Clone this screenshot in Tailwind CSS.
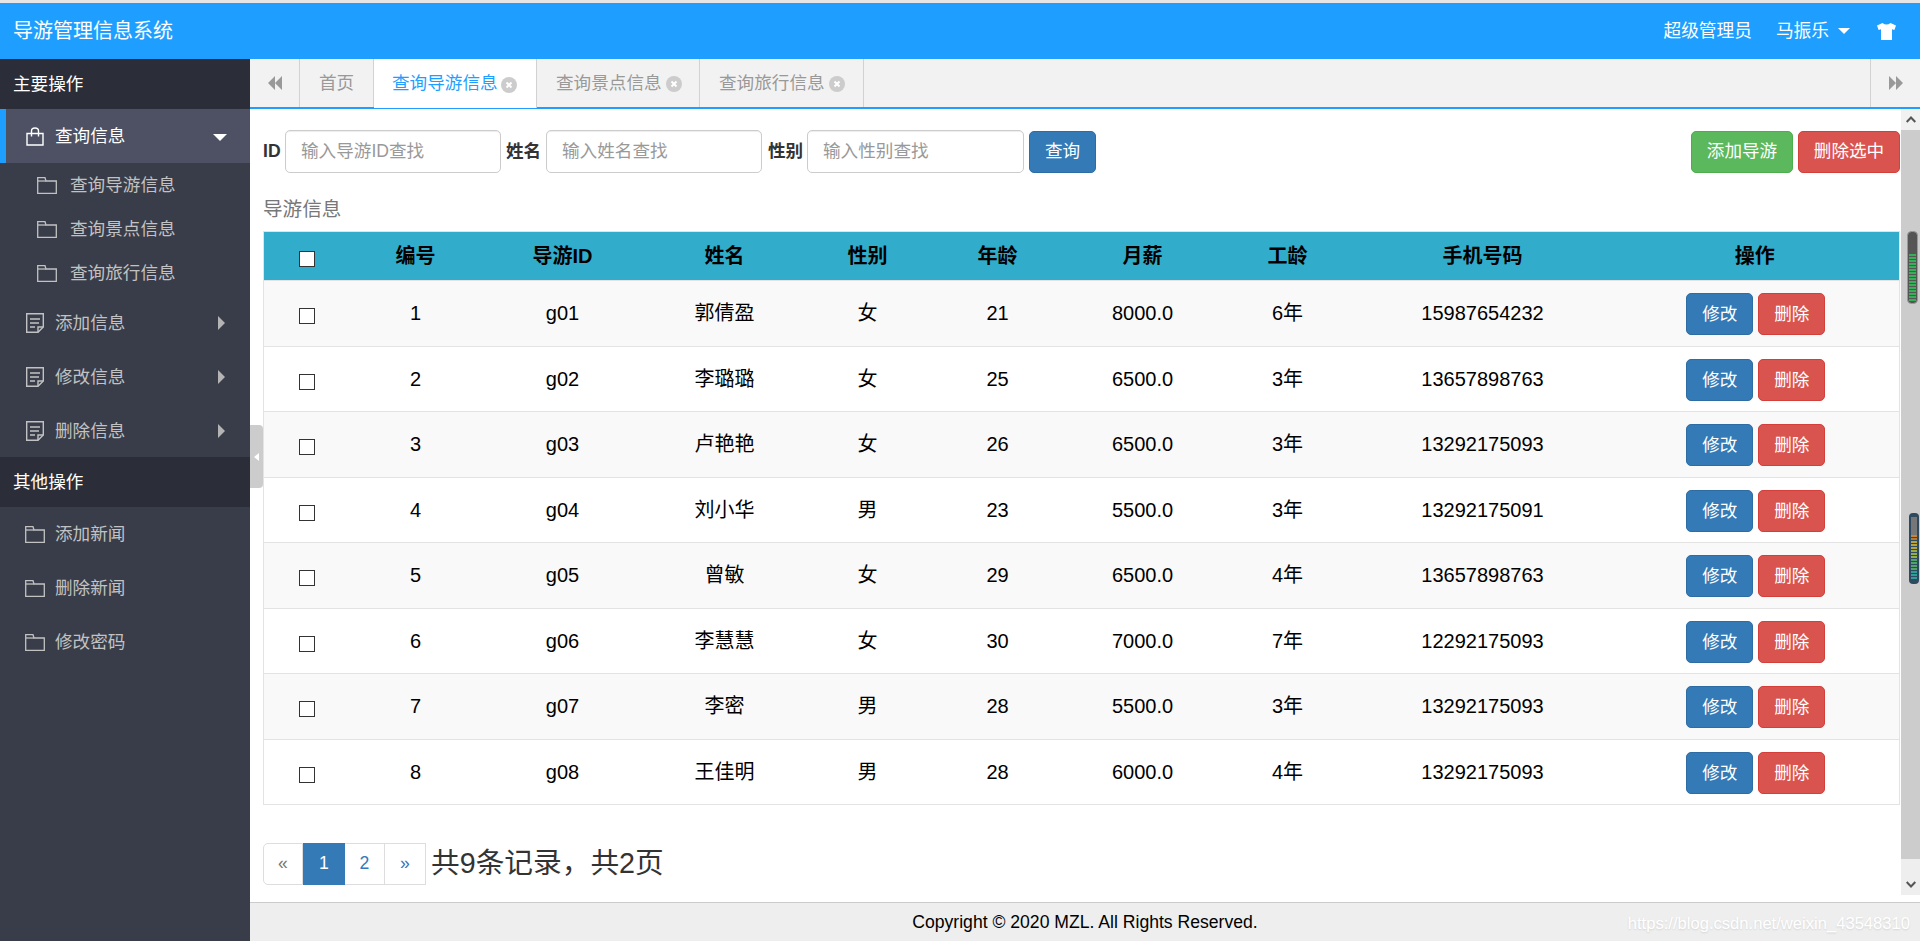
<!DOCTYPE html>
<html lang="zh-CN">
<head>
    <meta charset="UTF-8">
    <meta name="viewport" content="width=device-width, initial-scale=1.0">
    <title>导游管理信息系统</title>
    <script src="https://cdn.jsdelivr.net/npm/@tailwindcss/browser@4"></script>
</head>
<body class="h-[941px] w-[1920px] overflow-hidden flex flex-col bg-white text-[#333] font-['Liberation_Sans','Noto_Sans_CJK_SC',sans-serif]">
    <!-- top bar -->
    <div class="h-[3px] shrink-0 bg-[#e6e6e6]"></div>
    <header class="h-[56px] shrink-0 bg-[#1e9fff] text-white flex items-center pl-[13px] pr-[24px] text-[17.7px]">
        <div class="text-[20px] flex-1">导游管理信息系统</div>
        <span>超级管理员</span>
        <span class="ml-[24px]">马振乐</span>
        <span class="ml-[9px] w-0 h-0 border-x-[6px] border-x-transparent border-t-[6px] border-t-white"></span>
        <svg class="ml-[27px]" width="19" height="17" viewBox="0 0 19 17"><path fill="#fff" d="M5.5 0 L0 2.6 L1.6 7 L4 6.2 V17 H15 V6.2 L17.4 7 L19 2.6 L13.5 0 Q9.5 3 5.5 0Z"/></svg>
    </header>

    <div class="flex-1 flex min-h-0">
        <!-- sidebar -->
        <aside class="w-[250px] shrink-0 bg-[#393d49] text-[#c2c2c2] text-[17.6px]">
            <div class="h-[50px] bg-[#2b2e38] text-white flex items-center pl-[13px]">主要操作</div>
            <div class="h-[54px] bg-[#4d5163] border-l-[6px] border-[#1e9fff] text-white flex items-center pl-[20px] pr-[23px]">
                <svg width="18" height="19" viewBox="0 0 18 19" fill="none" stroke="#fff" stroke-width="1.4"><path d="M1 6.5 H17 V18 H1Z"/><path d="M5.5 9.5 V4 Q5.5 1 9 1 Q12.5 1 12.5 4 V9.5"/></svg>
                <span class="ml-[11px] flex-1">查询信息</span>
                <span class="w-0 h-0 border-x-[7px] border-x-transparent border-t-[7px] border-t-white mt-[3px]"></span>
            </div>
            <a class="h-[44px] flex items-center pl-[37px]">
                <svg width="20" height="17" viewBox="0 0 20 17" fill="none" stroke="#c2c2c2" stroke-width="1.3"><path d="M.7 .7 H8 L9 4 H19.3 V16.3 H.7Z"/><path d="M.7 4 H9"/></svg>
                <span class="ml-[13px]">查询导游信息</span>
            </a>
            <a class="h-[44px] flex items-center pl-[37px]">
                <svg width="20" height="17" viewBox="0 0 20 17" fill="none" stroke="#c2c2c2" stroke-width="1.3"><path d="M.7 .7 H8 L9 4 H19.3 V16.3 H.7Z"/><path d="M.7 4 H9"/></svg>
                <span class="ml-[13px]">查询景点信息</span>
            </a>
            <a class="h-[44px] flex items-center pl-[37px] mb-[1px]">
                <svg width="20" height="17" viewBox="0 0 20 17" fill="none" stroke="#c2c2c2" stroke-width="1.3"><path d="M.7 .7 H8 L9 4 H19.3 V16.3 H.7Z"/><path d="M.7 4 H9"/></svg>
                <span class="ml-[13px]">查询旅行信息</span>
            </a>
            <a class="h-[54px] flex items-center pl-[26px] pr-[25px]">
                <svg width="18" height="20" viewBox="0 0 18 20" fill="none" stroke="#c2c2c2" stroke-width="1.4"><path d="M.7 .7 H17.3 V14 L12 19.3 H.7Z"/><path d="M12 19.3 V14 H17.3"/><path d="M4 6 H14 M4 10 H13 M4 14 H9"/></svg>
                <span class="ml-[11px] flex-1">添加信息</span>
                <span class="w-0 h-0 border-y-[7px] border-y-transparent border-l-[7px] border-l-[#b4b4b4]"></span>
            </a>
            <a class="h-[54px] flex items-center pl-[26px] pr-[25px]">
                <svg width="18" height="20" viewBox="0 0 18 20" fill="none" stroke="#c2c2c2" stroke-width="1.4"><path d="M.7 .7 H17.3 V14 L12 19.3 H.7Z"/><path d="M12 19.3 V14 H17.3"/><path d="M4 6 H14 M4 10 H13 M4 14 H9"/></svg>
                <span class="ml-[11px] flex-1">修改信息</span>
                <span class="w-0 h-0 border-y-[7px] border-y-transparent border-l-[7px] border-l-[#b4b4b4]"></span>
            </a>
            <a class="h-[54px] flex items-center pl-[26px] pr-[25px]">
                <svg width="18" height="20" viewBox="0 0 18 20" fill="none" stroke="#c2c2c2" stroke-width="1.4"><path d="M.7 .7 H17.3 V14 L12 19.3 H.7Z"/><path d="M12 19.3 V14 H17.3"/><path d="M4 6 H14 M4 10 H13 M4 14 H9"/></svg>
                <span class="ml-[11px] flex-1">删除信息</span>
                <span class="w-0 h-0 border-y-[7px] border-y-transparent border-l-[7px] border-l-[#b4b4b4]"></span>
            </a>
            <div class="h-[50px] bg-[#2b2e38] text-white flex items-center pl-[13px] mt-[-1px]">其他操作</div>
            <a class="h-[54px] flex items-center pl-[25px]">
                <svg width="20" height="17" viewBox="0 0 20 17" fill="none" stroke="#c2c2c2" stroke-width="1.3"><path d="M.7 .7 H8 L9 4 H19.3 V16.3 H.7Z"/><path d="M.7 4 H9"/></svg>
                <span class="ml-[10px]">添加新闻</span>
            </a>
            <a class="h-[54px] flex items-center pl-[25px]">
                <svg width="20" height="17" viewBox="0 0 20 17" fill="none" stroke="#c2c2c2" stroke-width="1.3"><path d="M.7 .7 H8 L9 4 H19.3 V16.3 H.7Z"/><path d="M.7 4 H9"/></svg>
                <span class="ml-[10px]">删除新闻</span>
            </a>
            <a class="h-[54px] flex items-center pl-[25px]">
                <svg width="20" height="17" viewBox="0 0 20 17" fill="none" stroke="#c2c2c2" stroke-width="1.3"><path d="M.7 .7 H8 L9 4 H19.3 V16.3 H.7Z"/><path d="M.7 4 H9"/></svg>
                <span class="ml-[10px]">修改密码</span>
            </a>
        </aside>

        <main class="flex-1 min-w-0 flex flex-col relative">
            <!-- sidebar collapse handle -->
            <div class="absolute left-0 top-[366px] w-[13px] h-[63px] bg-[#cccccc] rounded-r-[4px] flex items-center justify-center z-10">
                <span class="w-0 h-0 border-y-[4px] border-y-transparent border-r-[5px] border-r-white"></span>
            </div>

            <!-- tabs -->
            <div class="h-[50px] shrink-0 bg-[#f2f2f2] border-b-2 border-[#1e9fff] flex text-[17.6px] text-[#999]">
                <div class="w-[50px] border-r border-[#d2d2d2] flex items-center justify-center">
                    <svg width="14" height="14" viewBox="0 0 14 14"><path fill="#999" d="M7 0 V14 L0 7Z M14 0 V14 L7 7Z"/></svg>
                </div>
                <div class="w-[74px] border-r border-[#d2d2d2] flex items-center pl-[19px]">首页</div>
                <div class="w-[163px] bg-white h-[49px] border-r border-[#d2d2d2] flex items-center pl-[18px] text-[#1e9fff]">
                    查询导游信息
                    <svg class="ml-[3px] mt-[2px]" width="16" height="16" viewBox="0 0 16 16"><circle cx="8" cy="8" r="8" fill="#ccc"/><path d="M5.5 5.5 L10.5 10.5 M10.5 5.5 L5.5 10.5" stroke="#fff" stroke-width="2"/></svg>
                </div>
                <div class="w-[163px] border-r border-[#d2d2d2] flex items-center pl-[19px]">
                    查询景点信息
                    <svg class="ml-[4px] mt-[2px]" width="16" height="16" viewBox="0 0 16 16"><circle cx="8" cy="8" r="8" fill="#ccc"/><path d="M5.5 5.5 L10.5 10.5 M10.5 5.5 L5.5 10.5" stroke="#fff" stroke-width="2"/></svg>
                </div>
                <div class="w-[164px] border-r border-[#d2d2d2] flex items-center pl-[19px]">
                    查询旅行信息
                    <svg class="ml-[4px] mt-[2px]" width="16" height="16" viewBox="0 0 16 16"><circle cx="8" cy="8" r="8" fill="#ccc"/><path d="M5.5 5.5 L10.5 10.5 M10.5 5.5 L5.5 10.5" stroke="#fff" stroke-width="2"/></svg>
                </div>
                <div class="flex-1"></div>
                <div class="w-[50px] border-l border-[#d2d2d2] flex items-center justify-center">
                    <svg width="14" height="14" viewBox="0 0 14 14"><path fill="#999" d="M0 0 V14 L7 7Z M7 0 V14 L14 7Z"/></svg>
                </div>
            </div>

            <!-- page content + scrollbar -->
            <div class="flex-1 flex min-h-0">
                <div class="flex-1 min-w-0 pl-[13px] pr-[1px] pt-[21px]">
                    <div class="flex items-center h-[43px] text-[17.6px]">
                        <label class="font-bold w-[22px]">ID</label>
                        <input id="q-id" placeholder="输入导游ID查找" class="w-[216px] h-[43px] px-[15px] border border-[#ccc] rounded-[5px] shadow-[inset_0_1px_1px_rgba(0,0,0,.075)] placeholder:text-[#999]">
                        <label class="font-bold ml-[5px] w-[40px]">姓名</label>
                        <input id="q-name" placeholder="输入姓名查找" class="w-[216px] h-[43px] px-[15px] border border-[#ccc] rounded-[5px] shadow-[inset_0_1px_1px_rgba(0,0,0,.075)] placeholder:text-[#999]">
                        <label class="font-bold ml-[6px] w-[39px]">性别</label>
                        <input id="q-sex" placeholder="输入性别查找" class="w-[217px] h-[43px] px-[15px] border border-[#ccc] rounded-[5px] shadow-[inset_0_1px_1px_rgba(0,0,0,.075)] placeholder:text-[#999]">
                        <button class="ml-[5px] w-[67px] h-[42px] bg-[#337ab7] border border-[#2e6da4] rounded-[5px] text-white">查询</button>
                        <div class="flex-1"></div>
                        <button class="w-[102px] h-[42px] bg-[#5cb85c] border border-[#4cae4c] rounded-[5px] text-white">添加导游</button>
                        <button class="ml-[5px] w-[102px] h-[42px] bg-[#d9534f] border border-[#d43f3a] rounded-[5px] text-white">删除选中</button>
                    </div>

                    <div class="text-[19.6px] text-[#777] mt-[22px] h-[28px] leading-[28px]">导游信息</div>
                    <table class="w-[1636px] mt-[8px] table-fixed border-collapse border border-[#e3e3e3] text-[20px] text-black text-center">
                        <colgroup>
                            <col class="w-[87px]"><col class="w-[130px]"><col class="w-[164px]"><col class="w-[160px]"><col class="w-[126px]">
                            <col class="w-[134px]"><col class="w-[156px]"><col class="w-[134px]"><col class="w-[256px]"><col class="w-[289px]">
                        </colgroup>
                        <thead class="bg-[#31adcb] font-bold">
                            <tr class="h-[49px]">
                                <th><input type="checkbox" class="appearance-none block mx-auto w-[16px] h-[16px] bg-white border border-[#333] translate-y-[3px]"></th>
                                <th>编号</th><th>导游ID</th><th>姓名</th><th>性别</th><th>年龄</th><th>月薪</th><th>工龄</th><th>手机号码</th><th>操作</th>
                            </tr>
                        </thead>
                        <tbody id="rows"></tbody>
                    </table>

                    <div class="flex items-center mt-[37px]">
                        <div class="flex h-[42px] text-[17.6px] text-[#337ab7]">
                            <a class="w-[40px] border border-[#ddd] rounded-l-[5px] flex items-center justify-center text-[#777]">«</a>
                            <a class="w-[42px] bg-[#337ab7] text-white flex items-center justify-center">1</a>
                            <a class="w-[39px] border-y border-[#ddd] flex items-center justify-center">2</a>
                            <a class="w-[42px] border border-[#ddd] flex items-center justify-center">»</a>
                        </div>
                        <span class="ml-[5px] text-[28.7px]">共9条记录，共2页</span>
                    </div>
                </div>

                <!-- scrollbar with the two little level widgets on top -->
                <div class="w-[19px] shrink-0 h-[786px] flex flex-col relative">
                    <div class="h-[21px] bg-[#f1f1f1] flex items-center justify-center">
                        <svg width="10" height="7" viewBox="0 0 10 7" fill="none" stroke="#555" stroke-width="2"><path d="M.7 6 L5 1.5 L9.3 6"/></svg>
                    </div>
                    <div class="flex-1 bg-[#cccccc]"></div>
                    <div class="h-[36px] bg-[#eeeeee] flex items-end justify-center pb-[7px]">
                        <svg width="10" height="7" viewBox="0 0 10 7" fill="none" stroke="#555" stroke-width="2"><path d="M.7 1 L5 5.5 L9.3 1"/></svg>
                    </div>
                    <svg class="absolute left-[6px] top-[122px]" width="11" height="73" viewBox="0 0 11 73">
                        <rect x=".5" y=".5" width="10" height="72" rx="4" fill="#555" stroke="#999"/>
                        <path stroke="#2ecc5a" stroke-width="1.4" d="M2 24 H9 M2 27 H9 M2 30 H9 M2 33 H9 M2 36 H9 M2 39 H9 M2 42 H9 M2 45 H9 M2 48 H9 M2 51 H9 M2 54 H9 M2 57 H9 M2 60 H9 M2 63 H9 M2 66 H9 M2 69 H9"/>
                    </svg>
                    <svg class="absolute left-[8px] top-[404px]" width="10" height="71" viewBox="0 0 10 71">
                        <rect width="10" height="71" rx="4" fill="#2d4a60"/>
                        <rect x="2" y="4" width="6" height="20" fill="#777"/>
                        <path stroke="#e08a20" stroke-width="1.4" d="M2 23 H8 M2 26 H8"/>
                        <path stroke="#e8c030" stroke-width="1.4" d="M2 29 H8 M2 32 H8 M2 35 H8"/>
                        <path stroke="#b8d040" stroke-width="1.4" d="M2 38 H8 M2 41 H8 M2 44 H8"/>
                        <path stroke="#60c070" stroke-width="1.4" d="M2 47 H8 M2 50 H8 M2 53 H8 M2 56 H8"/>
                        <path stroke="#30b8a8" stroke-width="1.4" d="M2 59 H8 M2 62 H8 M2 65 H8"/>
                    </svg>
                </div>
            </div>

            <footer class="h-[39px] shrink-0 bg-[#eeeeee] border-t border-[#cccccc] flex items-center justify-center text-[17.6px] text-black relative">
                Copyright © 2020 MZL. All Rights Reserved.
                <span class="absolute right-[10px] top-[9px] text-[16.6px] text-white [text-shadow:0_1px_2px_rgba(0,0,0,.12)]">https://blog.csdn.net/weixin_43548310</span>
            </footer>
        </main>
    </div>

    <script>
        const guides = [
            [1, 'g01', '郭倩盈', '女', 21, '8000.0', '6年', '15987654232'],
            [2, 'g02', '李璐璐', '女', 25, '6500.0', '3年', '13657898763'],
            [3, 'g03', '卢艳艳', '女', 26, '6500.0', '3年', '13292175093'],
            [4, 'g04', '刘小华', '男', 23, '5500.0', '3年', '13292175091'],
            [5, 'g05', '曾敏', '女', 29, '6500.0', '4年', '13657898763'],
            [6, 'g06', '李慧慧', '女', 30, '7000.0', '7年', '12292175093'],
            [7, 'g07', '李密', '男', 28, '5500.0', '3年', '13292175093'],
            [8, 'g08', '王佳明', '男', 28, '6000.0', '4年', '13292175093']
        ];

        document.getElementById('rows').innerHTML = guides.map(g => `
            <tr class="h-[65.5px] border-t border-[#e3e3e3] odd:bg-[#f9f9f9]">
                <td><input type="checkbox" class="appearance-none block mx-auto w-[16px] h-[16px] bg-white border border-[#333] translate-y-[3px]"></td>
                ${g.map(v => `<td>${v}</td>`).join('')}
                <td>
                    <div class="flex justify-center gap-[5px] pl-[2px] pt-[2px] text-[17.6px]">
                        <button class="w-[67px] h-[42px] bg-[#337ab7] border border-[#2e6da4] rounded-[5px] text-white">修改</button>
                        <button class="w-[67px] h-[42px] bg-[#d9534f] border border-[#d43f3a] rounded-[5px] text-white">删除</button>
                    </div>
                </td>
            </tr>
        `).join('');
    </script>
</body>
</html>
